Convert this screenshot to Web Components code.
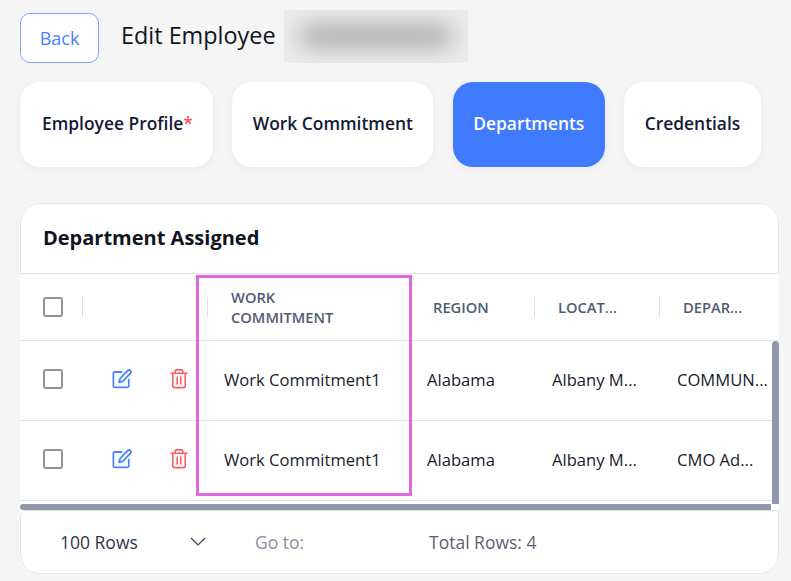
<!DOCTYPE html>
<html lang="en">
<head>
    <meta charset="UTF-8">
    <title>Edit Employee</title>
    <style>
        html, body { margin: 0; height: 100%; overflow: hidden; background: #f5f5f6; }
        body { font-family: "Open Sans", "Noto Sans", sans-serif; color: #161b2e; }
    </style>
</head>
<body>
    <script>
        const define = (name, html) => {
            customElements.define(name, class extends HTMLElement {
                connectedCallback() {
                    if (this.shadowRoot) return;
                    this.attachShadow({mode: 'open'});
                    this.shadowRoot.innerHTML = html;
                }
            });
        };

        define('back-button', `
            <style>
                :host { display: block; width: 79px; height: 50px; margin-top: 3px; box-sizing: border-box;
                    border: 1px solid #7ba6ff; border-radius: 10px; background: #fff; color: #4a7dff;
                    font-size: 18px; line-height: 48px; text-align: center; }
            </style>
            <slot></slot>`);

        define('blur-box', `
            <style>
                :host { display: block; width: 184px; height: 53px; background: #ebebeb; overflow: hidden; }
                div { width: 152px; height: 22px; margin: 15px 0 0 16px; background: #aaa; border-radius: 11px; filter: blur(11px); }
            </style>
            <div></div>`);

        define('page-head', `
            <style>
                :host { display: flex; height: 53px; }
                h1 { width: 154px; margin: 0 9px 0 22px; font-size: 23.4px; font-weight: 400; line-height: 51px; color: #10141f; white-space: nowrap; }
            </style>
            <back-button>Back</back-button>
            <h1>Edit Employee</h1>
            <blur-box></blur-box>`);

        define('tab-pill', `
            <style>
                :host { display: block; height: 85px; box-sizing: border-box; padding: 0 20.5px; border-radius: 20px;
                    background: #fff; box-shadow: 0 2px 10px rgba(30, 40, 70, .05);
                    font-size: 17.4px; font-weight: 560; line-height: 83px; color: #14193a; white-space: nowrap; }
                :host([active]) { background: #407bff; color: #fff; }
                :host([first]) { padding: 0 20px 0 22px; }
                ::slotted(span) { color: #ff4d5e; }
            </style>
            <slot></slot>`);

        define('tab-bar', `
            <style>
                :host { display: flex; gap: 19.4px; margin-top: 19px; }
            </style>
            <slot></slot>`);

        define('check-box', `
            <style>
                :host { display: block; width: 20px; height: 20px; box-sizing: border-box;
                    border: 2px solid #949494; border-radius: 3px; background: #fff; }
            </style>`);

        define('edit-icon', `
            <style>:host { display: block; width: 20px; height: 20px; } svg { display: block; }</style>
            <svg width="20" height="20" viewBox="0 0 20 20" fill="none" stroke="#4a84ff" stroke-width="1.8" stroke-linecap="round" stroke-linejoin="round">
                <path d="M9.5 3H3a1.6 1.6 0 0 0-1.6 1.6v12.2A1.6 1.6 0 0 0 3 18.4h12.2a1.6 1.6 0 0 0 1.6-1.6V10.5"/>
                <path d="M15.6 1.6a1.9 1.9 0 0 1 2.8 2.8l-7.7 8-3.7 1 1-3.7z"/>
            </svg>`);

        define('trash-icon', `
            <style>:host { display: block; width: 18px; height: 20px; } svg { display: block; }</style>
            <svg width="18" height="20" viewBox="0 0 18 20" fill="none" stroke="#ff5c64" stroke-width="1.6" stroke-linecap="round" stroke-linejoin="round">
                <path d="M1 4.3h16"/>
                <path d="M5.2 4V2.2A1.3 1.3 0 0 1 6.5 0.9h5A1.3 1.3 0 0 1 12.8 2.2V4"/>
                <path d="M2.8 4.5v12.4a1.7 1.7 0 0 0 1.7 1.7h9a1.7 1.7 0 0 0 1.7-1.7V4.5"/>
                <path d="M7.2 8v7M10.8 8v7"/>
            </svg>`);

        const gridCols = 'grid-template-columns: 63px 125px 202px 125px 125px 125px;';

        define('head-cell', `
            <style>
                :host { display: flex; align-items: center; box-sizing: border-box; padding-left: 23px; min-width: 0;
                    font-size: 14.7px; font-weight: 550; line-height: 20px; color: #4f5b76; position: relative; }
                i { position: absolute; right: 0; top: 23px; width: 1px; height: 20px; background: #dcdfe4; }
            </style>
            <div><slot></slot></div><i></i>`);

        define('table-head', `
            <style>
                :host { display: grid; ${gridCols} height: 67px; box-sizing: border-box; border-bottom: 1px solid #e3e3e6; overflow: hidden; }
            </style>
            <slot></slot>`);

        define('body-cell', `
            <style>
                :host { display: flex; align-items: center; gap: 38px; box-sizing: border-box; padding: 0 0 2px 17px; min-width: 0;
                    font-size: 16.6px; white-space: nowrap; color: #161b2e; }
                :host([wide]) { padding-left: 16px; }
                :host([box]) { padding: 0 0 3px 23px; }
                :host([actions]) { padding: 0 0 3px 29px; }
            </style>
            <slot></slot>`);

        define('table-row', `
            <style>
                :host { display: grid; ${gridCols} height: 80px; box-sizing: border-box; border-bottom: 1px solid #e3e3e6; }
            </style>
            <slot></slot>`);

        define('table-foot', `
            <style>
                :host { display: flex; align-items: center; height: 64px; box-sizing: border-box; padding: 0 0 1px 39px;
                    border: 1px solid #e3e3e6; border-radius: 6px 0 20px 20px; font-size: 17.5px; color: #30364a; }
                .rows { width: 130px; }
                svg { display: block; margin-right: 49px; }
                .go { width: 174px; color: #8a90a0; }
                .total { color: #5a6072; }
            </style>
            <span class="rows">100 Rows</span>
            <svg width="16" height="9" viewBox="0 0 16 9" fill="none" stroke="#3a4058" stroke-width="1.2"><path d="M1 1l7 7 7-7"/></svg>
            <span class="go">Go to:</span>
            <span class="total">Total Rows: 4</span>`);

        define('dept-card', `
            <style>
                :host { display: block; position: relative; margin-top: 36px; height: 371px; border-radius: 20px; background: #fff; overflow: hidden; }
                h2 { margin: 0; height: 71px; box-sizing: border-box; padding-left: 22px; border: 1px solid #e3e3e6; border-radius: 20px 20px 0 0;
                    font-size: 20px; font-weight: 700; line-height: 68px; color: #10141f; }
                .body { display: flex; height: 163px; }
                .rows { width: 752px; overflow: hidden; }
                .vbar { width: 7px; background: #9196aa; border-radius: 4px 4px 0 0; }
                .hbar { width: 751px; height: 6px; background: #9196aa; border-radius: 3px 0 0 3px; }
                .mark { position: absolute; left: 176px; top: 72px; width: 216px; height: 221px; box-sizing: border-box; border: 3px solid #e066dc; }
            </style>
            <h2>Department Assigned</h2>
            <slot name="head"></slot>
            <div class="body">
                <div class="rows"><slot></slot></div>
                <div class="vbar"></div>
            </div>
            <div class="hbar"></div>
            <table-foot></table-foot>
            <div class="mark"></div>`);

        define('edit-page', `
            <style>
                :host { display: block; padding: 10px 12px 0 20px; }
            </style>
            <slot></slot>`);
    </script>

    <edit-page>
        <page-head></page-head>
        <tab-bar>
            <tab-pill first>Employee Profile<span>*</span></tab-pill>
            <tab-pill>Work Commitment</tab-pill>
            <tab-pill active>Departments</tab-pill>
            <tab-pill>Credentials</tab-pill>
        </tab-bar>
        <dept-card>
            <table-head slot="head">
                <head-cell><check-box></check-box></head-cell>
                <head-cell></head-cell>
                <head-cell>WORK<br>COMMITMENT</head-cell>
                <head-cell>REGION</head-cell>
                <head-cell>LOCAT...</head-cell>
                <head-cell>DEPAR...</head-cell>
            </table-head>
            <table-row>
                <body-cell box><check-box></check-box></body-cell>
                <body-cell actions><edit-icon></edit-icon><trash-icon></trash-icon></body-cell>
                <body-cell wide>Work Commitment1</body-cell>
                <body-cell>Alabama</body-cell>
                <body-cell>Albany M...</body-cell>
                <body-cell>COMMUN...</body-cell>
            </table-row>
            <table-row>
                <body-cell box><check-box></check-box></body-cell>
                <body-cell actions><edit-icon></edit-icon><trash-icon></trash-icon></body-cell>
                <body-cell wide>Work Commitment1</body-cell>
                <body-cell>Alabama</body-cell>
                <body-cell>Albany M...</body-cell>
                <body-cell>CMO Ad...</body-cell>
            </table-row>
        </dept-card>
    </edit-page>
</body>
</html>
